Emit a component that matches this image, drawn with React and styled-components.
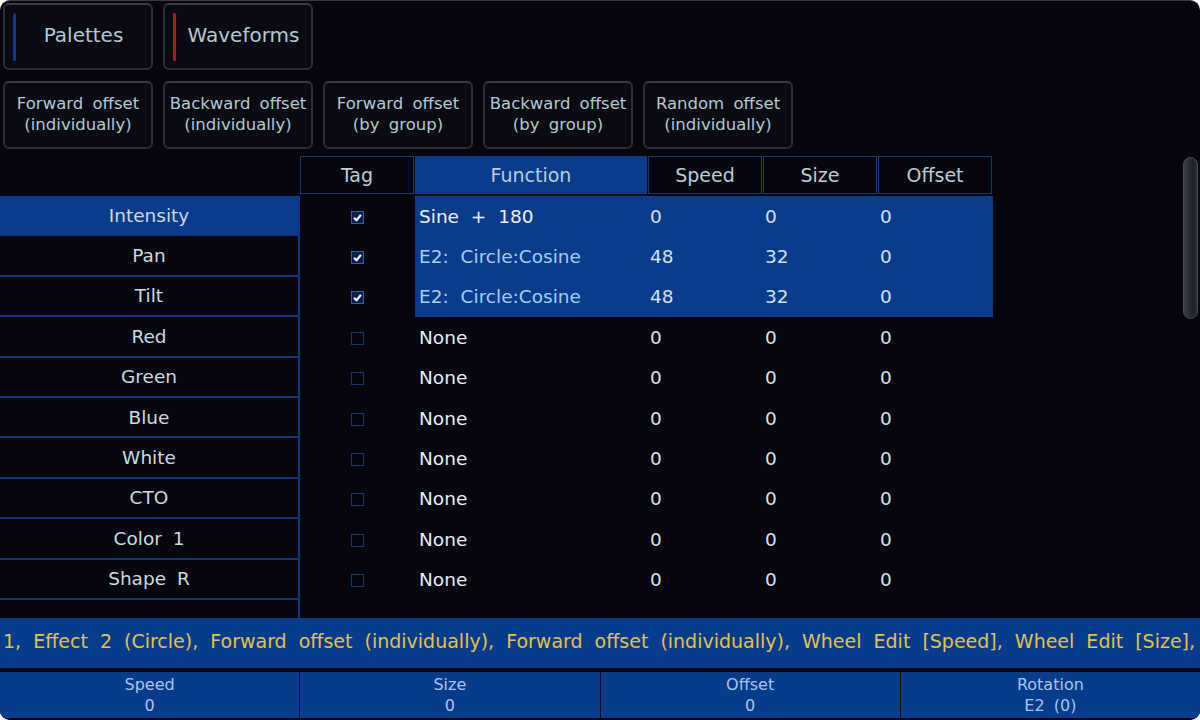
import React from 'react'
import styled, { createGlobalStyle } from 'styled-components'

const GlobalStyle = createGlobalStyle`
  body {
    margin: 0;
    background: #ffffff;
  }
  * {
    box-sizing: border-box;
  }
`

const Screen = styled.div`
  width: 1200px;
  height: 720px;
  background: #05060e;
  border-radius: 10px;
  border-top: 1px solid #3a3b44;
  overflow: hidden;
  display: flex;
  flex-direction: column;
  font-family: 'DejaVu Sans', sans-serif;
`

const TopArea = styled.div`
  display: flex;
  flex-direction: column;
  gap: 11px;
  padding: 2px 0 0 3px;
`

const ButtonRow = styled.div`
  display: flex;
  gap: 10px;
`

const Button = styled.div`
  width: 150px;
  height: ${props => props.$tall ? '67px' : '68px'};
  display: flex;
  align-items: center;
  padding: 0 0 ${props => props.$tall ? '3px' : '2px'} 8px;
  background: #090a12;
  border: 2px solid #2c2d36;
  border-top-color: #3a3b45;
  border-radius: 6px;
  color: #b2c9d4;
`

const Accent = styled.span`
  width: 3px;
  height: 48px;
  margin-top: 3px;
  border-radius: 2px;
  background: ${props => props.$color};
  flex: 0 0 auto;
`

const ButtonLabel = styled.span`
  flex: 1;
  text-align: center;
  font-size: ${props => props.$big ? '20px' : '16.5px'};
  line-height: ${props => props.$big ? '24px' : '21px'};
  word-spacing: ${props => props.$big ? '0' : '4px'};
  margin-left: ${props => props.$big ? '0' : '-8px'};
  white-space: pre-line;
`

const TableArea = styled.div`
  flex: 1;
  display: flex;
  margin-top: 7px;
  overflow: hidden;
`

const Table = styled.div`
  width: 993px;
  display: flex;
  flex-direction: column;
`

const cols = '300px 115px 233px 115px 115px 115px'

const HeaderRow = styled.div`
  display: grid;
  grid-template-columns: ${cols};
  height: 40px;
  flex: 0 0 auto;
`

const HeaderCell = styled.div`
  height: 38px;
  display: flex;
  align-items: center;
  justify-content: center;
  font-size: 19px;
  color: #bccdd5;
  background: ${props => props.$active ? '#0a3b8c' : '#05060e'};
  border: ${props => props.$empty ? 'none' : '1px solid #163a72'};
  margin-right: 1px;
`

const BodyRow = styled.div`
  display: grid;
  grid-template-columns: ${cols};
  height: 40.4px;
  flex: 0 0 auto;
`

const NameCell = styled.div`
  display: flex;
  align-items: center;
  justify-content: center;
  font-size: 18.5px;
  word-spacing: 5px;
  color: #ccd9e1;
  background: ${props => props.$selected ? '#0a3b8c' : '#05060e'};
  border-right: 2px solid #10357a;
  border-bottom: 2px solid #10357a;
`

const TagCell = styled.div`
  display: flex;
  align-items: center;
  justify-content: center;
  padding-top: 2px;
`

const Box = styled.span`
  width: 13px;
  height: 13px;
  display: flex;
  align-items: center;
  justify-content: center;
  border: 1px solid ${props => props.$checked ? '#2f5fa8' : '#15387a'};
  background: ${props => props.$checked ? '#0b1e4e' : 'transparent'};
`

const DataCell = styled.div`
  display: flex;
  align-items: center;
  padding-left: ${props => props.$first ? '4px' : '2px'};
  font-size: 18.5px;
  word-spacing: 6px;
  color: ${props => props.$tone || '#d8e1e8'};
  background: ${props => props.$active ? '#0a3b8c' : 'transparent'};
  white-space: nowrap;
`

const Spacer = styled.div`
  flex: 1;
`

const Scrollbar = styled.div`
  width: 15px;
  height: 162px;
  margin: 1px 2px 0 0;
  border-radius: 8px;
  border: 1px solid #4a4c58;
  background: linear-gradient(90deg, #3b3e4a, #1f2129 70%, #2a2c36);
`

const StatusBar = styled.div`
  height: 50px;
  flex: 0 0 auto;
  display: flex;
  align-items: center;
  padding: 0 0 4px 3px;
  background: #073b8c;
  color: #e0c34a;
  font-size: 19px;
  word-spacing: 6px;
  white-space: nowrap;
  overflow: hidden;
`

const BottomBar = styled.div`
  height: 52px;
  flex: 0 0 auto;
  display: grid;
  grid-template-columns: repeat(4, 1fr);
  gap: 1px;
  padding: 4px 0 2px;
  background: #05060e;
`

const BottomCell = styled.div`
  display: flex;
  flex-direction: column;
  align-items: center;
  justify-content: center;
  background: #073b8c;
  color: #a6c6ee;
  font-size: 16px;
  line-height: 21px;
  word-spacing: 4px;
`

const Check = ({ checked }) =>
  <Box $checked={checked}>
    {checked &&
      <svg width="11" height="11" viewBox="0 0 11 11">
        <path d="M2 5.8 L4.5 8.3 L9 2.8" fill="none" stroke="#eef4fa" strokeWidth="2.2" strokeLinejoin="round" />
      </svg>}
  </Box>

const rows = [
  { name: 'Intensity', tag: true, fn: 'Sine + 180', tone: '#eef2f6', speed: '0', size: '0', offset: '0' },
  { name: 'Pan', tag: true, fn: 'E2: Circle:Cosine', tone: '#a6d0ee', speed: '48', size: '32', offset: '0' },
  { name: 'Tilt', tag: true, fn: 'E2: Circle:Cosine', tone: '#a6d0ee', speed: '48', size: '32', offset: '0' },
  { name: 'Red', fn: 'None' },
  { name: 'Green', fn: 'None' },
  { name: 'Blue', fn: 'None' },
  { name: 'White', fn: 'None' },
  { name: 'CTO', fn: 'None' },
  { name: 'Color 1', fn: 'None' },
  { name: 'Shape R', fn: 'None' }
]

const offsetButtons = [
  'Forward offset\n(individually)',
  'Backward offset\n(individually)',
  'Forward offset\n(by group)',
  'Backward offset\n(by group)',
  'Random offset\n(individually)'
]

const wheels = [
  ['Speed', '0'],
  ['Size', '0'],
  ['Offset', '0'],
  ['Rotation', 'E2 (0)']
]

const App = () =>
  <Screen>
    <GlobalStyle />
    <TopArea>
      <ButtonRow>
        <Button $tall>
          <Accent $color="#0e3a8e" />
          <ButtonLabel $big>Palettes</ButtonLabel>
        </Button>
        <Button $tall>
          <Accent $color="#b01820" />
          <ButtonLabel $big>Waveforms</ButtonLabel>
        </Button>
      </ButtonRow>
      <ButtonRow>
        {offsetButtons.map(label =>
          <Button key={label}>
            <ButtonLabel>{label}</ButtonLabel>
          </Button>
        )}
      </ButtonRow>
    </TopArea>
    <TableArea>
      <Table>
        <HeaderRow>
          <HeaderCell $empty />
          <HeaderCell>Tag</HeaderCell>
          <HeaderCell $active>Function</HeaderCell>
          <HeaderCell>Speed</HeaderCell>
          <HeaderCell>Size</HeaderCell>
          <HeaderCell>Offset</HeaderCell>
        </HeaderRow>
        {rows.map((row, i) => {
          const active = !!row.tag
          return (
            <BodyRow key={row.name}>
              <NameCell $selected={i === 0}>{row.name}</NameCell>
              <TagCell><Check checked={!!row.tag} /></TagCell>
              <DataCell $first $active={active} $tone={row.tone || '#e6ecf1'}>{row.fn}</DataCell>
              <DataCell $active={active}>{row.speed || '0'}</DataCell>
              <DataCell $active={active}>{row.size || '0'}</DataCell>
              <DataCell $active={active}>{row.offset || '0'}</DataCell>
            </BodyRow>
          )
        })}
        <BodyRow>
          <NameCell />
        </BodyRow>
      </Table>
      <Spacer />
      <Scrollbar />
    </TableArea>
    <StatusBar>
      1, Effect 2 (Circle), Forward offset (individually), Forward offset (individually), Wheel Edit [Speed], Wheel Edit [Size],
    </StatusBar>
    <BottomBar>
      {wheels.map(([label, value]) =>
        <BottomCell key={label}>
          <span>{label}</span>
          <span>{value}</span>
        </BottomCell>
      )}
    </BottomBar>
  </Screen>

export default App
